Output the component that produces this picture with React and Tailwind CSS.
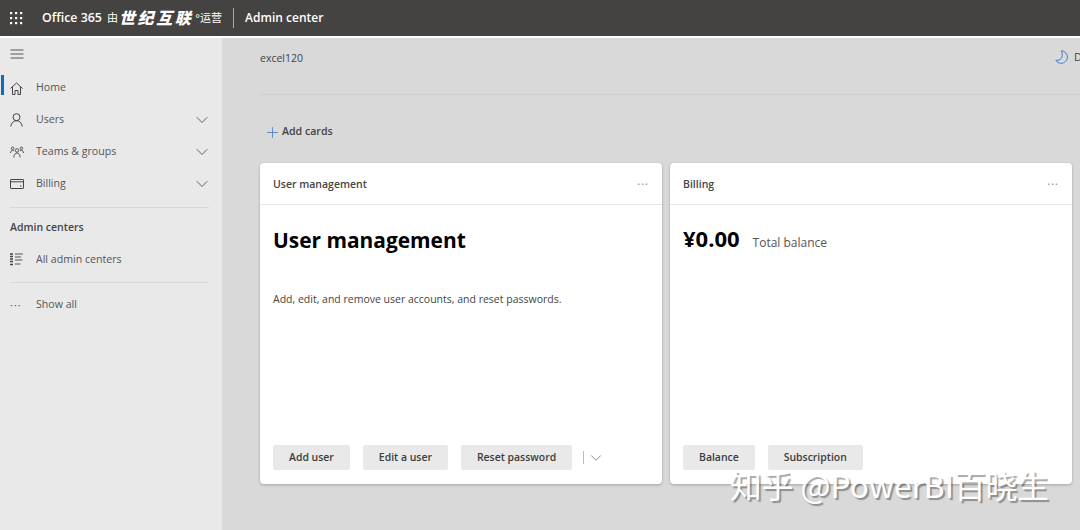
import React from 'react';
import { ChevronDown, Plus } from 'lucide-react';

const font = "font-['Open_Sans','Noto_Sans_CJK_SC',sans-serif]";

const Waffle = () => (
  <svg width="14" height="14" viewBox="0 0 14 14" fill="#fff">
    {[1, 6, 11].map((y) =>
      [1, 6, 11].map((x) => <rect key={`${x}-${y}`} x={x} y={y} width="2.2" height="2.2" />)
    )}
  </svg>
);

const HamburgerIcon = () => (
  <svg width="14" height="10" viewBox="0 0 14 10" fill="none" stroke="#555" strokeWidth="1">
    <path d="M0.500 1h13M0.500 5h13M0.500 9h13" />
  </svg>
);

const HomeIcon = () => (
  <svg width="13" height="13" viewBox="0 0 13 13" fill="none" stroke="#444" strokeWidth="1">
    <path d="M0.500 6.500 6.500 1l6 5.500" />
    <path d="M2.500 5v7.500h2.500V8.500h3v4h2.500V5" />
  </svg>
);

const UserIcon = () => (
  <svg width="13" height="14" viewBox="0 0 13 14" fill="none" stroke="#444" strokeWidth="1">
    <circle cx="6.500" cy="4.200" r="3.500" />
    <path d="M0.800 13.500c.3-3.400 2.600-5.800 5.700-5.800s5.400 2.400 5.700 5.800" />
  </svg>
);

const TeamsIcon = () => (
  <svg width="14" height="13" viewBox="0 0 14 13" fill="none" stroke="#444" strokeWidth="0.9">
    <circle cx="7" cy="4.500" r="1.700" />
    <path d="M3.800 11.500c.3-2.800 1.500-4.500 3.200-4.500s2.900 1.700 3.200 4.500" />
    <circle cx="2.600" cy="2.300" r="1.300" />
    <path d="M.4 7C.6 5.400 1.400 4.400 2.600 4.400c.6 0 1.100.2 1.500.6" />
    <circle cx="11.400" cy="2.300" r="1.300" />
    <path d="M13.600 7c-.2-1.600-1-2.600-2.200-2.600-.6 0-1.100.2-1.500.6" />
  </svg>
);

const BillingIcon = () => (
  <svg width="14" height="10" viewBox="0 0 14 10" fill="none" stroke="#444" strokeWidth="1">
    <rect x="0.500" y="0.500" width="13" height="9" rx="0.500" />
    <path d="M0.500 2.800h13" />
    <path d="M10 7h1.500" strokeWidth="1.200" />
  </svg>
);

const ListIcon = () => (
  <svg width="13" height="13" viewBox="0 0 13 13" fill="none" stroke="#444">
    <path d="M0 1h3M0 3.500h3M0 6h3M0 8.500h3M0 11.500h3" strokeWidth="1.500" />
    <path d="M5 1h8M5 4h6M5 7h7.500M5 11h5.500" strokeWidth="0.900" />
  </svg>
);

const MoonIcon = () => (
  <svg width="13" height="14" viewBox="0 0 13 14" fill="none" stroke="#3f7fd0" strokeWidth="1">
    <path d="M6.500 0.700c3.400.6 5.900 3 5.900 6.300 0 3.400-2.700 6.300-6.200 6.300-2.300 0-4.300-1.200-5.400-3 3.300.5 5.800-1.100 6.300-3.900.3-2-.1-4-.6-5.700z" />
  </svg>
);

const navItems = [
  { label: 'Home', icon: <HomeIcon />, active: true },
  { label: 'Users', icon: <UserIcon />, chevron: true },
  { label: 'Teams & groups', icon: <TeamsIcon />, chevron: true },
  { label: 'Billing', icon: <BillingIcon />, chevron: true },
];

const NavRow = ({ label, icon, active, chevron }) => (
  <div className="relative flex h-8 items-center text-[#555]">
    {active && <div className="absolute left-[1px] top-[3px] h-[20px] w-[3px] bg-[#0f6cbd]" />}
    <div className="flex w-[36px] justify-start pl-[10px] text-[#444]">{icon}</div>
    <span className="text-[10.600px]">{label}</span>
    {chevron && <ChevronDown size={20} strokeWidth={1} className="ml-auto mr-[10px] text-[#444]" />}
  </div>
);

const ActionButton = ({ children }) => (
  <button className="h-[25px] rounded-[2px] bg-[#e9e9e9] px-4 text-[10.450px] font-semibold text-[#3c3c3c]">
    {children}
  </button>
);

const Card = ({ title, children, footer }) => (
  <div className="flex h-[321px] w-[402px] shrink-0 flex-col rounded-[4px] bg-white shadow-[0_1px_3px_rgba(0,0,0,0.25)]">
    <div className="flex h-[42px] items-center justify-between border-b border-[#e5e5e5] px-[13px] pt-[2px] text-[10.500px] font-semibold text-[#444]">
      <span>{title}</span>
      <span className="tracking-[1px] text-[#999]">···</span>
    </div>
    <div className="flex-1 px-[13px]">{children}</div>
    <div className="flex items-center gap-[13px] px-[13px] pb-[14px]">{footer}</div>
  </div>
);

export default function App() {
  return (
    <div className={`relative flex h-[530px] w-[1080px] flex-col overflow-hidden bg-[#d9d9d9] ${font}`}>
      <header className="flex h-[36px] shrink-0 items-center bg-[#454341] text-white">
        <div className="ml-[9px] flex w-[33px]"><Waffle /></div>
        <span className="text-[12.400px] font-semibold">Office 365</span>
        <span className="ml-[5px] text-[11px]">由</span>
        <span className="ml-[1px] text-[16px] font-black italic tracking-[2.600px]">世纪互联</span>
        <span className="ml-[2px] text-[11px]">°运营</span>
        <div className="mx-[11px] h-[20px] w-px bg-[#aaa]" />
        <span className="text-[12px] font-semibold">Admin center</span>
      </header>
      <div className="h-[2px] shrink-0 bg-white" />

      <div className="flex flex-1">
        <aside className="w-[222px] shrink-0 bg-[#e9e9e9]">
          <div className="flex h-[32px] items-center pl-[10px]">
            <HamburgerIcon />
          </div>
          <div className="mt-[2px]">
            {navItems.map((item) => <NavRow key={item.label} {...item} />)}
          </div>
          <div className="ml-[10px] mr-[13px] mt-[7px] border-t border-[#d8d8d8]" />
          <div className="mt-[12px] pl-[10px] text-[10.500px] font-semibold text-[#444]">Admin centers</div>
          <div className="mt-[8px]">
            <NavRow label="All admin centers" icon={<ListIcon />} />
          </div>
          <div className="ml-[10px] mr-[13px] mt-[6px] border-t border-[#d8d8d8]" />
          <div className="mt-[6px]">
            <NavRow label="Show all" icon={<span className="text-[11px] leading-none tracking-[1px] text-[#555]">···</span>} />
          </div>
        </aside>

        <main className="min-w-0 flex-1 pl-[38px]">
          <div className="flex h-[40px] items-center">
            <span className="pt-[1px] text-[10.500px] text-[#444]">excel120</span>
            <div className="ml-[752px] mt-[-2px] flex shrink-0 items-center gap-[6px]">
              <MoonIcon />
              <span className="whitespace-nowrap text-[11px] text-[#444]">Dark mode</span>
            </div>
          </div>
          <div className="mt-[16px] border-b border-[#d0d0d0]" />
          <div className="mt-[28px] flex h-[18px] items-center pl-[4px] text-[10.600px] font-semibold text-[#444]">
            <Plus size={17} strokeWidth={1} className="text-[#2f6fc4]" />
            <span className="ml-[1px]">Add cards</span>
          </div>
          <div className="mt-[22px] flex gap-[8px]">
            <Card
              title="User management"
              footer={
                <>
                  <ActionButton>Add user</ActionButton>
                  <ActionButton>Edit a user</ActionButton>
                  <ActionButton>Reset password</ActionButton>
                  <div className="ml-[-2px] flex items-center gap-[3px]">
                    <div className="h-[13px] w-px bg-[#bbb]" />
                    <ChevronDown size={18} strokeWidth={1} className="text-[#666]" />
                  </div>
                </>
              }
            >
              <h2 className="mt-[19px] text-[20.900px] font-bold leading-[32px] text-black">User management</h2>
              <p className="mt-[36px] text-[10.500px] text-[#444]">Add, edit, and remove user accounts, and reset passwords.</p>
            </Card>
            <Card
              title="Billing"
              footer={
                <>
                  <ActionButton>Balance</ActionButton>
                  <ActionButton>Subscription</ActionButton>
                </>
              }
            >
              <div className="mt-[17px] flex items-baseline gap-[13px]">
                <span className="text-[22px] font-bold leading-[32px] text-black">¥0.00</span>
                <span className="text-[12px] text-[#555]">Total balance</span>
              </div>
            </Card>
          </div>
        </main>
      </div>

      <div className="absolute left-[730px] top-[463px] whitespace-nowrap font-['Noto_Sans_CJK_SC',sans-serif] text-[31.700px] leading-[42px] text-white [text-shadow:2px_2px_1px_rgba(0,0,0,0.35)]">
        知乎 @PowerBI百晓生
      </div>
    </div>
  );
}
